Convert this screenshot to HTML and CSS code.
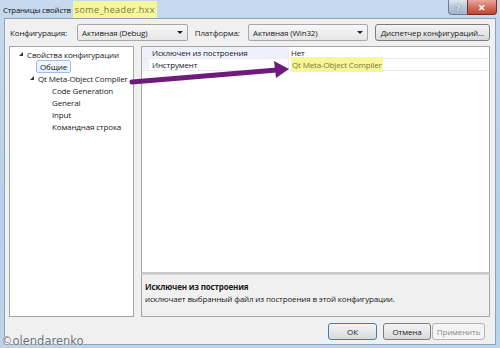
FILE: index.html
```html
<!DOCTYPE html>
<html lang="ru">
<head>
    <meta charset="UTF-8">
    <title>Страницы свойств</title>
    <link rel="stylesheet" href="styles.css">
</head>
<body>
    <div class="window">
        <div class="titlebar">
            <span class="title">Страницы свойств <span class="marker">some_header.hxx</span></span>
            <div class="caption-buttons">
                <span class="cap-help">?</span>
                <span class="cap-close">&#x2715;</span>
            </div>
        </div>
        <div class="client">
            <div class="toolbar">
                <span class="label">Конфигурация:</span>
                <div class="combo combo-config">Активная (Debug)<span class="combo-arrow"></span></div>
                <span class="label label-platform">Платформа:</span>
                <div class="combo combo-platform">Активная (Win32)<span class="combo-arrow"></span></div>
                <button class="btn btn-manager">Диспетчер конфигураций...</button>
            </div>
            <div class="panels">
                <div class="tree">
                    <div class="node lvl0"><span class="expander"></span>Свойства конфигурации</div>
                    <div class="node lvl1"><span class="selected">Общие</span></div>
                    <div class="node lvl1b"><span class="expander"></span>Qt Meta-Object Compiler</div>
                    <div class="node lvl2">Code Generation</div>
                    <div class="node lvl2">General</div>
                    <div class="node lvl2">Input</div>
                    <div class="node lvl2">Командная строка</div>
                </div>
                <div class="props">
                    <div class="grid">
                        <div class="row row-active">
                            <span class="gutter"></span>
                            <span class="name">Исключен из построения</span>
                            <span class="value">Нет</span>
                        </div>
                        <div class="row">
                            <span class="gutter"></span>
                            <span class="name">Инструмент</span>
                            <span class="value"><span class="marker">Qt Meta-Object Compiler</span></span>
                        </div>
                    </div>
                    <div class="description">
                        <div class="desc-title">Исключен из построения</div>
                        <div class="desc-text">исключает выбранный файл из построения в этой конфигурации.</div>
                    </div>
                </div>
            </div>
            <div class="footer">
                <button class="btn btn-ok">ОК</button>
                <button class="btn btn-cancel">Отмена</button>
                <button class="btn btn-apply" disabled>Применить</button>
            </div>
        </div>
        <svg class="annotation" width="500" height="348" viewBox="0 0 500 348">
            <line x1="132" y1="82" x2="277" y2="70" stroke="#6e1b7c" stroke-width="5" stroke-linecap="round"/>
            <polygon points="274,61 289,69 276,78" fill="#6e1b7c"/>
        </svg>
        <span class="watermark">©olendarenko</span>
    </div>
</body>
</html>
```

FILE: styles.css
```css
* {
    box-sizing: border-box;
}

body {
    margin: 0;
    font-family: "Open Sans", "Noto Sans", sans-serif;
    font-size: 8px;
    letter-spacing: -0.15px;
    color: #1a1a1a;
}

.window {
    position: relative;
    width: 500px;
    height: 348px;
    display: flex;
    flex-direction: column;
    padding: 0 4px 3px 4px;
    background: linear-gradient(to bottom, #c6d9ee, #b7cfe9 60%, #bcd3ec);
    overflow: hidden;
}

.titlebar {
    height: 18px;
    display: flex;
    align-items: flex-start;
    justify-content: space-between;
}

.title {
    margin-top: 3px;
    margin-left: -1px;
    font-size: 7.8px;
    color: #111;
}

.marker {
    background: #f6f79a;
    color: #7d7a3c;
    padding: 2px 1px;
}

.title .marker {
    font-size: 9px;
    letter-spacing: 0.4px;
    padding: 2px 2px 3px;
}

.caption-buttons {
    display: flex;
    margin-right: -1px;
}

.cap-help,
.cap-close {
    height: 15px;
    display: flex;
    align-items: center;
    justify-content: center;
    color: #fff;
    font-weight: bold;
    border: 1px solid #6e7f95;
    border-top: none;
}

.cap-help {
    width: 19px;
    font-size: 9px;
    color: #f4f4f4;
    background: linear-gradient(to bottom, #dfe8f2, #b5c6d9 50%, #a4b7cd);
    border-radius: 0 0 0 4px;
    border-right: none;
    text-shadow: 0 0 2px #556;
}

.cap-close {
    width: 30px;
    font-size: 9px;
    background: linear-gradient(to bottom, #e9a99c, #d4705f 50%, #c2452f);
    border-radius: 0 0 4px 0;
    border-color: #7f2c20;
}

.client {
    flex: 1;
    display: flex;
    flex-direction: column;
    background: #f0f0f0;
    border: 1px solid #8ea3bb;
    padding: 5px 5px 4px 4px;
}

.toolbar {
    height: 17px;
    display: flex;
    align-items: center;
}

.label {
    margin-left: 1px;
    width: 68px;
}

.label-platform {
    width: 54px;
    margin-left: 7px;
}

.combo {
    position: relative;
    height: 17px;
    display: flex;
    align-items: center;
    padding-left: 4px;
    background: linear-gradient(to bottom, #f7f7f7, #e6e6e6);
    border: 1px solid #a2a8b0;
    border-radius: 2px;
}

.combo-config {
    width: 112px;
}

.combo-platform {
    width: 121px;
}

.combo-arrow {
    position: absolute;
    right: 4px;
    top: 6px;
    border-left: 3px solid transparent;
    border-right: 3px solid transparent;
    border-top: 3px solid #222;
}

.btn {
    font-family: inherit;
    font-size: 8px;
    letter-spacing: -0.15px;
    color: #1a1a1a;
    height: 17px;
    padding: 0;
    background: linear-gradient(to bottom, #f3f3f3, #e8e8e8 50%, #d8d8d8);
    border: 1px solid #7c7c7c;
    border-radius: 3px;
}

.btn-manager {
    margin-left: 7px;
    width: 117px;
}

.panels {
    flex: 1;
    display: flex;
    margin-top: 5px;
    gap: 7px;
}

.tree {
    width: 125px;
    background: #fff;
    border: 1px solid #a6a6a6;
    padding-top: 1px;
}

.node {
    height: 12px;
    display: flex;
    align-items: center;
    white-space: nowrap;
}

.lvl0 {
    padding-left: 9px;
}

.lvl1 {
    padding-left: 26px;
}

.lvl1b {
    padding-left: 20px;
}

.lvl2 {
    padding-left: 42px;
}

.expander {
    width: 0;
    height: 0;
    margin-right: 4px;
    border-left: 4px solid transparent;
    border-bottom: 4px solid #333;
}

.selected {
    padding: 0 3px;
    line-height: 11px;
    background: linear-gradient(to bottom, #f6f9fd, #e4edf9);
    border: 1px solid #9cc0e6;
    border-radius: 2px;
}

.props {
    flex: 1;
    display: flex;
    flex-direction: column;
}

.grid {
    flex: 1;
    background: #fff;
    border: 1px solid #a6a6a6;
    border-bottom: 2px solid #c9c9c9;
}

.row {
    height: 12px;
    display: flex;
    align-items: center;
    border-bottom: 1px solid #e8ebf6;
}

.gutter {
    width: 7px;
    align-self: stretch;
    background: #eef0fb;
}

.name {
    width: 140px;
    height: 100%;
    display: flex;
    align-items: center;
    padding-left: 3px;
    border-right: 1px solid #e8ebf6;
}

.row-active .name {
    background: #eef0fb;
}

.value {
    padding-left: 2px;
}

.description {
    height: 43px;
    border: 1px solid #a6a6a6;
    border-top: 1px solid #d8d8d8;
    padding: 6px 0 0 3px;
}

.desc-title {
    font-weight: bold;
    height: 12px;
}

.desc-text {
    height: 12px;
}

.footer {
    display: flex;
    justify-content: flex-end;
    margin-top: 6px;
    padding-right: 5px;
    height: 17px;
}

.btn-ok {
    width: 49px;
    border-color: #3c7fb1;
}

.btn-cancel {
    width: 48px;
    margin-left: 6px;
}

.btn-apply {
    width: 53px;
    margin-left: 1px;
    color: #8a8a8a;
    background: #f4f4f4;
    border-color: #b1b5b8;
}

.annotation {
    position: absolute;
    left: 0;
    top: 0;
    pointer-events: none;
}

.watermark {
    position: absolute;
    left: 1px;
    bottom: 0;
    font-family: "DejaVu Sans", sans-serif;
    font-size: 11.5px;
    letter-spacing: 0;
    color: #6a6f78;
    text-shadow: 0 0 1px #fff, 0 0 1px #fff;
}
```
